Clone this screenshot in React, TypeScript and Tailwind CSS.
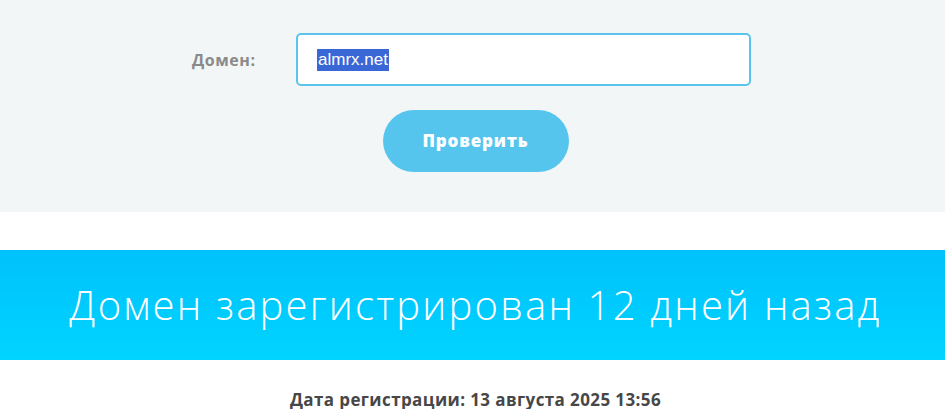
import React from "react";

export default function App() {
  return (
    <div className="w-full bg-white" style={{ fontFamily: '"Open Sans", "Noto Sans", sans-serif' }}>
      <section className="bg-[#f3f6f7] h-[212px] flex flex-col items-center pt-[33px]">
        <div className="flex items-center mr-[2px]">
          <label className="w-[104px] text-[16px] font-bold tracking-[0.55px] text-[#8a8a8a]">Домен:</label>
          <div className="w-[455px] h-[53px] bg-white border-2 border-[#5ac4ee] rounded-[5px] flex items-center pl-[19px]">
            <span className="bg-[#3967d6] text-white text-[17px] leading-[22px] px-[1px]" style={{ fontFamily: '"Liberation Sans", Arial, sans-serif' }}>almrx.net</span>
          </div>
        </div>
        <button className="mt-[24px] w-[186px] h-[62px] rounded-full bg-[#56c5ee] text-white text-[17px] font-extrabold tracking-[0.8px] ml-[6px]">
          Проверить
        </button>
      </section>
      <div className="h-[38px]" />
      <section className="h-[110px] bg-gradient-to-b from-[#00c1fc] to-[#00d4ff] flex items-center justify-center">
        <h1 className="text-white text-[40px] font-light tracking-[2.2px] pl-[6px]">Домен зарегистрирован 12 дней назад</h1>
      </section>
      <div className="flex justify-center pt-[27px]">
        <p className="text-[17px] font-bold tracking-[0.4px] text-[#474747] pl-[6px]">Дата регистрации: 13 августа 2025 13:56</p>
      </div>
    </div>
  );
}
